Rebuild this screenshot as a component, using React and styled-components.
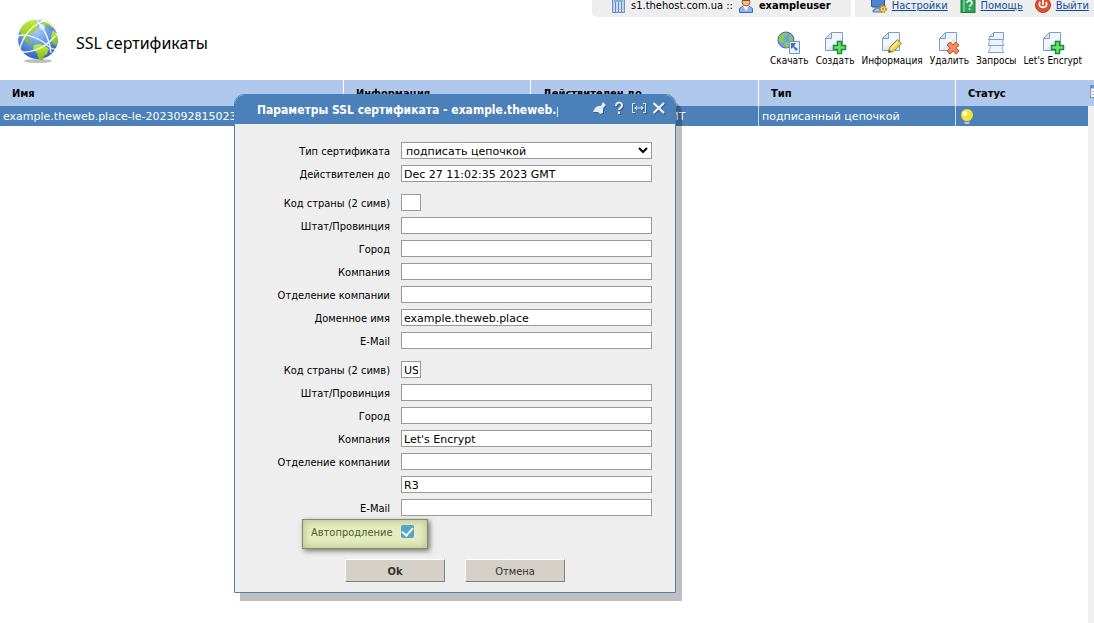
import React from 'react'
import styled, { createGlobalStyle } from 'styled-components'

const narrow = '"DejaVu Sans Condensed","DejaVu Sans",sans-serif'
const wide = '"DejaVu Sans",sans-serif'

const GlobalStyle = createGlobalStyle`
*{
box-sizing:border-box;
}
body{
margin:0;
background-color:white;
color:black;
font-family:${narrow};
font-size:11px;
overflow:hidden;
}
button,input,select{
font-family:inherit;
font-size:inherit;
color:inherit;
}
`

const Page = styled.div`
position:relative;
min-height:100vh;
display:flex;
flex-direction:column;
`
const Header = styled.header`
height:80px;
display:flex;
justify-content:space-between;
`
const Brand = styled.div`
display:flex;
align-items:center;
gap:14px;
padding-left:14px;
`
const Title = styled.h1`
margin:0;
padding-top:6px;
font-family:"Noto Sans","Open Sans",sans-serif;
font-size:16px;
line-height:22px;
font-weight:normal;
white-space:nowrap;
`
const HeaderRight = styled.div`
display:flex;
flex-direction:column;
align-items:flex-end;
`
const TopBar = styled.div`
display:flex;
gap:4px;
`
const TopTab = styled.div`
height:17px;
display:flex;
align-items:flex-end;
gap:5px;
overflow:hidden;
background-color:#eeeeee;
border-bottom-left-radius:${({ $round }) => ($round ? '5px' : '0')};
padding:${({ $round }) => ($round ? '0 20px 4px 18px' : '0 5px 4px 16px')};
`
const TopText = styled.span`
font-size:11px;
line-height:14px;
font-weight:${({ $bold }) => ($bold ? 'bold' : 'normal')};
white-space:nowrap;
`
const TopLink = styled.a`
font-size:11px;
line-height:14px;
color:#0a4f9e;
margin-right:7px;
white-space:nowrap;
&:last-child{
margin-right:0;
}
`
const Toolbar = styled.nav`
display:flex;
gap:7px;
padding:14px 12px 0 0;
`
const Tool = styled.button`
border:none;
background:none;
padding:0;
display:flex;
flex-direction:column;
align-items:center;
font-size:10px;
line-height:12px;
white-space:nowrap;
`

const Content = styled.main`
flex:1;
display:flex;
`
const TableWrap = styled.div`
flex:1;
`
const Table = styled.table`
width:100%;
table-layout:fixed;
border-collapse:separate;
border-spacing:0;
`
const Th = styled.th`
height:26px;
width:${({ $width }) => $width || 'auto'};
padding:0 0 0 12px;
text-align:left;
background-color:#b0c8ec;
border-right:${({ $last }) => ($last ? 'none' : '1px solid white')};
white-space:nowrap;
overflow:hidden;
`
const Td = styled.td`
height:20px;
padding:1px 0 0 3px;
font-family:${wide};
color:white;
background-color:#4c80b8;
border-right:${({ $last }) => ($last ? 'none' : '1px solid #c9d8ea')};
white-space:nowrap;
overflow:hidden;
svg{
display:block;
}
`
const Side = styled.aside`
width:6px;
background-color:#f0f0f0;
overflow:hidden;
`
const ColumnsButton = styled.button`
display:block;
width:100%;
height:26px;
border:none;
padding:0 0 0 2px;
background-color:#b0c8ec;
overflow:hidden;
`

/* window over the list */
const Dialog = styled.section`
position:absolute;
left:234px;
top:94px;
width:442px;
border:1px solid #4c80b8;
border-radius:10px 10px 0 0;
background-color:#eeeeee;
box-shadow:6px 8px 0 rgba(0,0,0,0.25);
`
const DialogHeader = styled.div`
height:29px;
display:flex;
align-items:center;
justify-content:space-between;
padding:0 8px 0 22px;
border-radius:9px 9px 0 0;
background-color:#4c80b8;
color:white;
`
const DialogTitle = styled.h2`
margin:0;
width:301px;
font-size:12px;
line-height:16px;
white-space:nowrap;
overflow:hidden;
`
const DialogTools = styled.div`
display:flex;
gap:4px;
padding-bottom:3px;
`
const DialogTool = styled.button`
border:none;
background:none;
padding:0;
width:16px;
height:16px;
svg{
display:block;
filter:drop-shadow(1px 1px 0 rgba(30,60,110,0.5));
}
`
const Form = styled.form`
padding:18px 23px 10px 23px;
`
const Group = styled.div`
display:flex;
flex-direction:column;
gap:6px;
margin-bottom:12px;
&:nth-of-type(3){
margin-bottom:3px;
}
`
const Row = styled.div`
display:flex;
align-items:center;
height:17px;
`
const Label = styled.label`
width:132px;
margin-right:11px;
padding-top:2px;
text-align:right;
white-space:nowrap;
`
const Input = styled.input`
width:${({ $short }) => ($short ? '20px' : '251px')};
height:17px;
padding:1px 2px 0;
border:1px solid #999999;
background-color:white;
font-family:${wide};
color:black;
`
const Select = styled.select`
width:251px;
height:17px;
padding:1px 0 0;
border:1px solid #999999;
border-radius:0;
background-color:white;
font-family:${wide};
color:black;
`
const Renew = styled.div`
width:126px;
height:30px;
margin-left:44px;
display:flex;
align-items:flex-start;
justify-content:space-between;
padding:5px 13px 0 8px;
border:1px solid #858b69;
background-color:#e5ecbe;
box-shadow:2px 2px 5px rgba(0,0,0,0.5),inset 0 0 9px rgba(90,110,40,0.4);
label{
line-height:15px;
color:#4f5a35;
}
`
const Check = styled.input`
appearance:none;
width:13px;
height:13px;
margin:0;
display:grid;
place-content:center;
border-radius:2px;
background-color:#56a3cc;
&:checked::after{
content:'';
width:5px;
height:9px;
margin-bottom:2px;
border:solid #f2f8d8;
border-width:0 2px 2px 0;
transform:rotate(42deg);
}
`
const Buttons = styled.div`
display:flex;
justify-content:center;
gap:20px;
padding-top:10px;
`
const Button = styled.button`
width:100px;
height:23px;
padding:1px 0 0;
border:1px solid;
border-color:white #808080 #808080 white;
background-color:#d4d0c8;
color:#333333;
font-weight:${({ $bold }) => ($bold ? 'bold' : 'normal')};
`

const Globe = () => (
  <svg width="48" height="48" viewBox="0 0 48 48">
    <defs>
      <radialGradient id="globe" cx="45%" cy="30%" r="75%">
        <stop offset="0" stopColor="#a9cdf8" />
        <stop offset="0.55" stopColor="#5a8fe0" />
        <stop offset="1" stopColor="#2a58b0" />
      </radialGradient>
      <linearGradient id="land" x1="0" y1="0" x2="0" y2="1">
        <stop offset="0" stopColor="#c4ec3e" />
        <stop offset="1" stopColor="#7fba1c" />
      </linearGradient>
    </defs>
    <ellipse cx="24" cy="45" rx="14" ry="2" fill="#000" opacity="0.25" />
    <circle cx="24" cy="23" r="20" fill="url(#globe)" />
    <g fill="url(#land)">
      <path d="M6 15C9 8 14 4 20 3l4 3-2 4 3 1-5 5-4 2-3 4 2 3 4 2-1 2-6-3-4-6z" />
      <path d="M28 4c5 0 9 3 12 7l-2 1-5-3-3 1-3-3z" />
      <path d="M20 29l6-1 5 2 4 3-2 5-3 2-1 4h-4l-2-7-4-4z" />
      <path d="M37 20l2-6 3 3 2 6-2 7-4-3z" />
    </g>
    <g fill="none" stroke="#f6faff" strokeWidth="1.5" opacity="0.9">
      <path d="M4 14C9 5 17 2 26 4c8 1 14 6 17 12" />
      <path d="M2 21c8-5 24 1 32 9 8 6 12 3 12-2 0-4-2-8-4-11" />
      <path d="M5 35C9 20 18 8 33 4" />
      <path d="M23 4c8 10 13 20 14 33" />
      <path d="M4 21c-4 9 1 16 8 15 12-1 23-8 29-16" />
    </g>
    <circle cx="28" cy="11" r="3" fill="#fff" opacity="0.6" />
  </svg>
)

const Sheet = () => (
  <g>
    <path d="M8.500 1.500h11v18h-17v-12z" fill="#f2f7ff" stroke="#7c9cca" />
    <path d="M8.500 1.500v6h-6z" fill="#d5e4f8" stroke="#7c9cca" />
    <path d="M4 18l14-11v12H4z" fill="#cfe0f6" opacity="0.6" />
  </g>
)

const toolIcons = {
  download: (
    <g>
      <circle cx="9" cy="9" r="8" fill="#6fa0e2" stroke="#3c68b0" />
      <path d="M2 6c2-3 5-5 9-4l-2 3-3 2 2 3-3 2-3-2zM8 11l4 0 2 3-4 3-3-3zM13 3l3 4-1 4-3-3z" fill="#8fca4a" />
      <path d="M12.500 10.500h10v12h-10z" fill="#e9f2ff" stroke="#6f93c6" />
      <path d="M14 12v6l2-2 3 4 2-2-4-3 2-3z" fill="#3c70bd" />
    </g>
  ),
  add: (
    <g>
      <Sheet />
      <path d="M14.500 10.500h4v4h4v4h-4v4h-4v-4h-4v-4h4z" fill="#6fdf68" stroke="#15913a" strokeWidth="1.500" />
    </g>
  ),
  edit: (
    <g>
      <Sheet />
      <path d="M8.500 21.500l1-5 8-8 4 4-8 8z" fill="#e8cf4c" stroke="#9b8529" />
      <path d="M11 18l7-7" stroke="#fff1a0" strokeWidth="1.500" />
      <path d="M8.500 21.500l.5-3 2.500 2.500z" fill="#6b6034" />
    </g>
  ),
  remove: (
    <g>
      <Sheet />
      <path d="M13 11l3 3 3-3 3 3-3 3 3 3-3 3-3-3-3 3-3-3 3-3-3-3z" fill="#f58a5d" stroke="#c34a24" />
    </g>
  ),
  stack: (
    <g fill="#edf4ff" stroke="#7c9cca">
      <path d="M5.500 14.500h14c-3 3 0 4 0 7h-15c0-3 3-4 1-7z" />
      <path d="M4.500 8.500h15c-2 3 0 4 0 6h-15c0-3 2-4 0-6z" />
      <path d="M9.500 1.500h10v7h-15c1-1 1-2 1-3z" />
      <path d="M9.500 1.500v4h-4" fill="#d5e4f8" />
    </g>
  ),
}

const ToolIcon = ({ name }) => (
  <svg width="24" height="24" viewBox="0 0 24 24">{toolIcons[name]}</svg>
)

const topIcons = {
  server: (
    <g>
      <path d="M2.500-1h12v16.500h-12z" fill="#b4cdf0" stroke="#6d93cc" />
      <path d="M4 6h9M4 8.500h9M4 11h9M4 13.500h9" stroke="#f4f8ff" />
      <path d="M4 4h9M5.500 5v10M8.500 5v10M11.500 5v10" stroke="#5f88c6" />
    </g>
  ),
  user: (
    <g>
      <path d="M1.500 15.500v-4l3-2h7l3 2v4z" fill="#8fb4e8" stroke="#3e6db3" />
      <path d="M5 9h6l-3 5z" fill="#fff" />
      <circle cx="8" cy="5" r="4" fill="#f4bd83" stroke="#9a6238" />
      <path d="M4 4c0-5 8-5 8 0z" fill="#7c5230" />
    </g>
  ),
  settings: (
    <g>
      <rect x="0.500" y="-2" width="13" height="12" rx="1" fill="#4f86d2" stroke="#34548a" />
      <path d="M4 11h5v2h2v2H2v-2h2z" fill="#a8bfdd" stroke="#5a7299" />
      <circle cx="12" cy="12" r="3" fill="#ffe375" stroke="#bd8a19" strokeDasharray="1.500 1" strokeWidth="2" />
      <circle cx="12" cy="12" r="1" fill="#a67a19" />
    </g>
  ),
  help: (
    <g>
      <rect x="1" y="0" width="14" height="15.500" fill="#2fa35a" stroke="#1d7a40" />
      <path d="M4 0v15" stroke="#a9dfbc" />
      <path d="M7 6c0-3 5-3 5 0 0 2-2.500 2-2.500 4M9.500 11.500v1.500" fill="none" stroke="#fff" strokeWidth="1.500" />
    </g>
  ),
  exit: (
    <g>
      <circle cx="8" cy="8" r="7.500" fill="#e0512f" stroke="#b93a1f" />
      <path d="M5 5c-4 7 10 7 6 0M8 3v5" fill="none" stroke="#fff" strokeWidth="1.800" />
    </g>
  ),
}

const TopIcon = ({ name }) => (
  <svg width="16" height="16" viewBox="0 0 16 16">{topIcons[name]}</svg>
)

const Bulb = () => (
  <svg width="16" height="16" viewBox="0 0 16 16">
    <circle cx="8" cy="6" r="6" fill="#f3e336" />
    <circle cx="6" cy="4.500" r="2.500" fill="#fffcc0" />
    <path d="M5.500 11h5v3l-1 1h-3l-1-1z" fill="#c9ccd0" />
    <path d="M5.500 12.500h5" stroke="#7a828c" />
  </svg>
)

const ColumnsIcon = () => (
  <svg width="14" height="14" viewBox="0 0 14 14">
    <rect x="0.500" y="0.500" width="13" height="12" fill="#fff" stroke="#6c8fc4" />
    <path d="M0 2h14" stroke="#6c8fc4" strokeWidth="3" />
    <path d="M0 6.500h14M0 9.500h14" stroke="#a8c0e4" />
  </svg>
)

const dialogIcons = {
  pin: <path d="M2 12l2-4 3-2 3 0 2-4 3 3-3 3v5l-3 1-2-2z" fill="#e4edf7" />,
  help: <path d="M5 6c0-5 7-4 6 0-.5 2-3 2-3 4M8 11.500v2.500" fill="none" stroke="#e4edf7" strokeWidth="2" />,
  resize: <path d="M4 3.500H1.500v9H4M12 3.500h2.500v9H12M3.500 8h9M6 6l-2 2 2 2M10 6l2 2-2 2" fill="none" stroke="#e4edf7" />,
  close: <path d="M2.500 3l10.500 10M13 3L2.500 13" stroke="#f2f6fb" strokeWidth="2" />,
}

const tools = [
  { icon: 'download', text: 'Скачать' },
  { icon: 'add', text: 'Создать' },
  { icon: 'edit', text: 'Информация' },
  { icon: 'remove', text: 'Удалить' },
  { icon: 'stack', text: 'Запросы' },
  { icon: 'add', text: "Let's Encrypt" },
]

const dialogTools = [
  { icon: 'pin', text: 'Закрепить' },
  { icon: 'help', text: 'Помощь' },
  { icon: 'resize', text: 'Ширина' },
  { icon: 'close', text: 'Закрыть' },
]

const subject = [
  { id: 'country', label: 'Код страны (2 симв)', value: '', short: true },
  { id: 'state', label: 'Штат/Провинция', value: '' },
  { id: 'city', label: 'Город', value: '' },
  { id: 'org', label: 'Компания', value: '' },
  { id: 'unit', label: 'Отделение компании', value: '' },
  { id: 'domain', label: 'Доменное имя', value: 'example.theweb.place' },
  { id: 'email', label: 'E-Mail', value: '' },
]

const issuer = [
  { id: 'icountry', label: 'Код страны (2 симв)', value: 'US', short: true },
  { id: 'istate', label: 'Штат/Провинция', value: '' },
  { id: 'icity', label: 'Город', value: '' },
  { id: 'iorg', label: 'Компания', value: "Let's Encrypt" },
  { id: 'iunit', label: 'Отделение компании', value: '' },
  { id: 'iname', label: '', value: 'R3' },
  { id: 'iemail', label: 'E-Mail', value: '' },
]

const Field = ({ id, label, value, short }) => (
  <Row>
    <Label htmlFor={id}>{label}</Label>
    <Input id={id} type="text" defaultValue={value} $short={short} />
  </Row>
)

const CertDialog = () => (
  <Dialog role="dialog">
    <DialogHeader>
      <DialogTitle>Параметры SSL сертификата - example.theweb.place</DialogTitle>
      <DialogTools>
        {dialogTools.map((t) => (
          <DialogTool key={t.icon} type="button" aria-label={t.text}>
            <svg width="16" height="16" viewBox="0 0 16 16">{dialogIcons[t.icon]}</svg>
          </DialogTool>
        ))}
      </DialogTools>
    </DialogHeader>
    <Form>
      <Group>
        <Row>
          <Label htmlFor="type">Тип сертификата</Label>
          <Select id="type">
            <option>подписать цепочкой</option>
          </Select>
        </Row>
        <Field id="until" label="Действителен до" value="Dec 27 11:02:35 2023 GMT" />
      </Group>
      <Group>
        {subject.map((f) => <Field key={f.id} {...f} />)}
      </Group>
      <Group>
        {issuer.map((f) => <Field key={f.id} {...f} />)}
      </Group>
      <Renew>
        <label htmlFor="renew">Автопродление</label>
        <Check id="renew" type="checkbox" defaultChecked />
      </Renew>
      <Buttons>
        <Button type="button" $bold>Ok</Button>
        <Button type="button">Отмена</Button>
      </Buttons>
    </Form>
  </Dialog>
)

const App = () => {
  return (
    <Page>
      <GlobalStyle />
      <Header>
        <Brand>
          <Globe />
          <Title>SSL сертификаты</Title>
        </Brand>
        <HeaderRight>
          <TopBar>
            <TopTab $round>
              <TopIcon name="server" />
              <TopText>s1.thehost.com.ua ::</TopText>
              <TopIcon name="user" />
              <TopText $bold>exampleuser</TopText>
            </TopTab>
            <TopTab>
              <TopIcon name="settings" />
              <TopLink href="#settings">Настройки</TopLink>
              <TopIcon name="help" />
              <TopLink href="#help">Помощь</TopLink>
              <TopIcon name="exit" />
              <TopLink href="#exit">Выйти</TopLink>
            </TopTab>
          </TopBar>
          <Toolbar>
            {tools.map((t) => (
              <Tool key={t.text} type="button">
                <ToolIcon name={t.icon} />
                {t.text}
              </Tool>
            ))}
          </Toolbar>
        </HeaderRight>
      </Header>
      <Content>
        <TableWrap>
          <Table>
            <thead>
              <tr>
                <Th $width="344px">Имя</Th>
                <Th $width="187px">Информация</Th>
                <Th $width="228px">Действителен до</Th>
                <Th $width="197px">Тип</Th>
                <Th $last>Статус</Th>
              </tr>
            </thead>
            <tbody>
              <tr>
                <Td>example.theweb.place-le-2023092815023</Td>
                <Td />
                <Td>Dec 27 11:02:35 2023 GMT</Td>
                <Td>подписанный цепочкой</Td>
                <Td $last><Bulb /></Td>
              </tr>
            </tbody>
          </Table>
        </TableWrap>
        <Side>
          <ColumnsButton type="button" aria-label="Колонки">
            <ColumnsIcon />
          </ColumnsButton>
        </Side>
      </Content>
      <CertDialog />
    </Page>
  )
}

export default App
